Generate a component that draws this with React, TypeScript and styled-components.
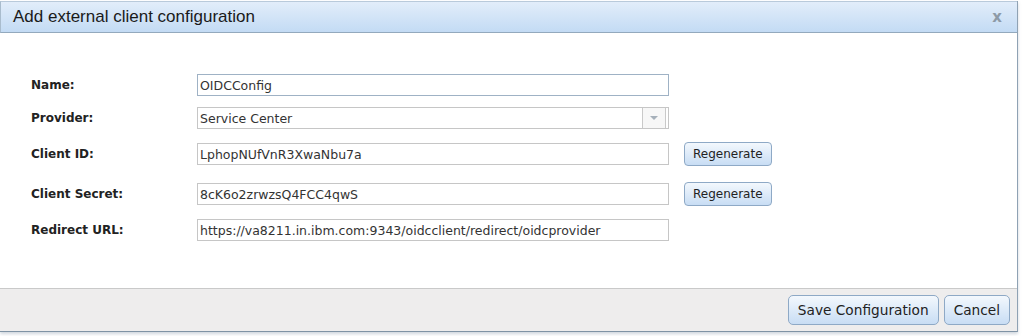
import React from "react";
import styled, { createGlobalStyle } from "styled-components";

const GlobalStyle = createGlobalStyle`
  body {
    margin: 0;
    background: #ffffff;
    font-family: "DejaVu Sans", Verdana, sans-serif;
  }
`;

const Page = styled.div`
  width: 1024px;
  height: 336px;
  padding-top: 1px;
  box-sizing: border-box;
  overflow: hidden;
`;

const Dialog = styled.div`
  width: 1018px;
  height: 331px;
  box-sizing: border-box;
  display: flex;
  flex-direction: column;
  border-right: 1px solid #8fa2b4;
  border-bottom: 1px solid #7f93a5;
  box-shadow: 0 2px 3px rgba(120, 140, 160, 0.35);
  background: #fff;
`;

const Header = styled.div`
  height: 30px;
  display: flex;
  align-items: center;
  justify-content: space-between;
  padding: 0 15px 0 12px;
  background: linear-gradient(#e2edfa, #c3dbf4);
  border-bottom: 1px solid #93a9bd;
  border-left: 1px solid #a9bccd;
  border-top: 1px solid #b9cadb;
`;

const Title = styled.div`
  font-family: "Liberation Sans", Arial, sans-serif;
  font-size: 17px;
  color: #1a1a1a;
`;

const Close = styled.span`
  font-family: "DejaVu Sans", sans-serif;
  font-weight: bold;
  font-size: 15px;
  color: #8d9aa7;
`;

const Body = styled.div`
  flex: 1;
  padding: 40px 0 0 31px;
`;

const Row = styled.div<{ $gap: number }>`
  display: flex;
  align-items: center;
  height: 24px;
  margin-bottom: ${(p) => p.$gap}px;
`;

const Label = styled.label`
  width: 166px;
  font-weight: bold;
  font-size: 12px;
  color: #222;
`;

const Field = styled.div<{ $focus?: boolean }>`
  width: 472px;
  height: 22px;
  box-sizing: border-box;
  border: 1px solid ${(p) => (p.$focus ? "#9fb2c5" : "#c6c6c6")};
  display: flex;
  align-items: center;
  justify-content: space-between;
  padding-left: 2px;
  font-size: 12.5px;
  color: #333;
  background: #fff;
`;

const DropButton = styled.div`
  width: 24px;
  height: 20px;
  box-sizing: border-box;
  margin-right: 2px;
  border: 1px solid #c9c9c9;
  border-top: none;
  border-bottom: none;
  display: flex;
  align-items: center;
  justify-content: center;
  background: #f7f7f7;
`;

const Arrow = styled.span`
  width: 0;
  height: 0;
  border-left: 4px solid transparent;
  border-right: 4px solid transparent;
  border-top: 4px solid #a6b0ba;
`;

const Button = styled.button<{ $big?: boolean }>`
  font-family: "DejaVu Sans", Verdana, sans-serif;
  font-size: ${(p) => (p.$big ? "13.7px" : "12px")};
  height: ${(p) => (p.$big ? "30px" : "24px")};
  padding: ${(p) => (p.$big ? "0 9px" : "0 8px")};
  margin-left: ${(p) => (p.$big ? "0" : "15px")};
  color: #222;
  border: 1px solid #8ea9c6;
  border-radius: ${(p) => (p.$big ? "5px" : "4px")};
  background: linear-gradient(#f3f8fd, #c8ddf4);
  cursor: pointer;
`;

const Footer = styled.div`
  height: 42px;
  display: flex;
  align-items: center;
  justify-content: flex-end;
  gap: 5px;
  padding-right: 7px;
  background: #eeeded;
  border-top: 1px solid #c9c9c9;
`;

const fields = [
  { label: "Name:", value: "OIDCConfig", gap: 9, focus: true },
  { label: "Provider:", value: "Service Center", gap: 12, select: true },
  { label: "Client ID:", value: "LphopNUfVnR3XwaNbu7a", gap: 16, regen: true },
  { label: "Client Secret:", value: "8cK6o2zrwzsQ4FCC4qwS", gap: 12, regen: true },
  { label: "Redirect URL:", value: "https://va8211.in.ibm.com:9343/oidcclient/redirect/oidcprovider", gap: 0 },
];

export default function App() {
  return (
    <Page>
      <GlobalStyle />
      <Dialog>
        <Header>
          <Title>Add external client configuration</Title>
          <Close>x</Close>
        </Header>
        <Body>
          {fields.map((f) => (
            <Row key={f.label} $gap={f.gap}>
              <Label>{f.label}</Label>
              <Field $focus={f.focus}>
                {f.value}
                {f.select && (
                  <DropButton>
                    <Arrow />
                  </DropButton>
                )}
              </Field>
              {f.regen && <Button>Regenerate</Button>}
            </Row>
          ))}
        </Body>
        <Footer>
          <Button $big>Save Configuration</Button>
          <Button $big>Cancel</Button>
        </Footer>
      </Dialog>
    </Page>
  );
}
